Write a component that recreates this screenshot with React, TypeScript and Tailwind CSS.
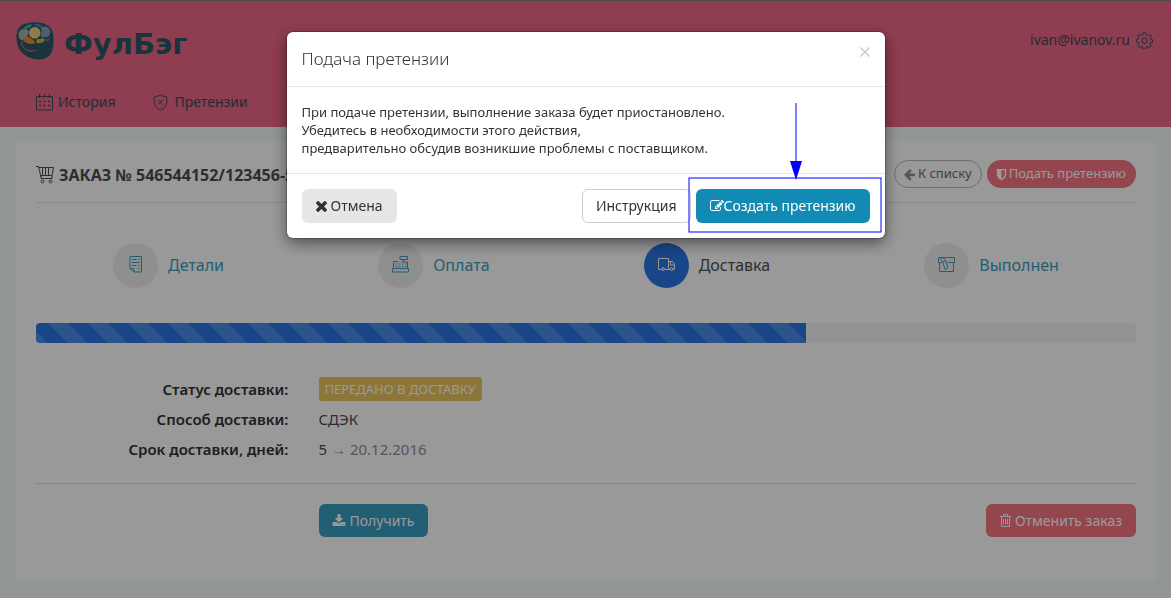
import React from "react";

type IconProps = { className?: string };

const Glyph = ({ d, className, viewBox = "0 0 1792 1792" }: { d: string; className?: string; viewBox?: string }) => (
  <svg viewBox={viewBox} fill="currentColor" aria-hidden="true" className={`inline-block shrink-0 ${className ?? ""}`}>
    <path d={d} />
  </svg>
);

const TIMES =
  "M1490 1322q0 40-28 68l-136 136q-28 28-68 28t-68-28l-294-294-294 294q-28 28-68 28t-68-28l-136-136q-28-28-28-68t28-68l294-294-294-294q-28-28-28-68t28-68l136-136q28-28 68-28t68 28l294 294 294-294q28-28 68-28t68 28l136 136q28 28 28 68t-28 68l-294 294 294 294q28 28 28 68z";
const EDIT =
  "M888 1184l116-116-152-152-116 116v56h96v96h56zm440-720q-16-16-33 1l-350 350q-17 17-1 33t33-1l350-350q17-17 1-33zm80 594v190q0 119-84.5 203.5t-203.5 84.5h-832q-119 0-203.5-84.5t-84.5-203.5v-832q0-119 84.5-203.5t203.5-84.5h832q63 0 117 25 15 7 18 23 3 17-9 29l-49 49q-14 14-32 8-23-6-45-6h-832q-66 0-113 47t-47 113v832q0 66 47 113t113 47h832q66 0 113-47t47-113v-126q0-13 9-22l64-64q15-15 35-7t20 29zm-96-738l288 288-672 672h-288v-288zm444 132l-92 92-288-288 92-92q28-28 68-28t68 28l152 152q28 28 28 68t-28 68z";
const ARROW_LEFT =
  "M1664 896v128q0 53-32.5 90.5t-84.5 37.5h-704l293 294q38 36 38 90t-38 90l-75 76q-37 37-90 37-52 0-91-37l-651-652q-37-37-37-90 0-52 37-91l651-650q38-38 91-38 52 0 90 38l75 74q38 38 38 91t-38 91l-293 293h704q52 0 84.5 37.5t32.5 90.5z";
const SHIELD =
  "M1344 960v-640h-448v1137q119-63 213-137 235-184 235-360zm192-768v768q0 86-33.5 170.5t-83 150-118 127.5-126.5 103-121 77.5-89.5 49.5-42.5 20q-12 6-26 6t-26-6q-16-7-42.5-20t-89.5-49.5-121-77.5-126.5-103-118-127.5-83-150-33.5-170.5v-768q0-26 19-45t45-19h1152q26 0 45 19t19 45z";
const DOWNLOAD =
  "M1344 1344q0-26-19-45t-45-19-45 19-19 45 19 45 45 19 45-19 19-45zm256 0q0-26-19-45t-45-19-45 19-19 45 19 45 45 19 45-19 19-45zm128-224v320q0 40-28 68t-68 28h-1472q-40 0-68-28t-28-68v-320q0-40 28-68t68-28h465l135 136q58 56 136 56t136-56l136-136h464q40 0 68 28t28 68zm-325-569q17 41-14 70l-448 448q-18 19-45 19t-45-19l-448-448q-31-29-14-70 17-39 59-39h256v-448q0-26 19-45t45-19h256q26 0 45 19t19 45v448h256q42 0 59 39z";

const LogoMark = () => (
  <svg viewBox="0 0 38 38" aria-hidden="true" className="size-[38px]">
    <path d="M7 2.500C14-.5 25-.5 31 3c5 3 6.500 8 6.500 15 0 10-2 16-9 18.500C24 38 19 37.500 14.500 36 6 33 1 26 .5 17 .2 10 2 5 7 2.500z" fill="#2c5768" />
    <path d="M7.500 6.500C9.500 3.500 12 2.500 16 2.300 15.500 5 12 7.500 7.500 6.500z" fill="#2dbd96" />
    <path d="M17.500 2.500c3-1.200 7-.8 9 1.200-2 2-6 1.500-9-1.200z" fill="#3b8aae" />
    <path d="M2.800 14c-1-5 3-8 7-7 3.500.8 3 4 2 6-1 3-3.500 3-5 5.500-2-1-4-1.500-4-4.500z" fill="#a9adb2" />
    <circle cx="18.700" cy="10.800" r="5.800" fill="#f2ce77" />
    <path d="M24.500 5.500c4-2.500 9.300-.5 9.800 4 .4 4.500-4 6.500-7.800 5.700-2-1-2.300-2.200-1.500-4 .8-2 .7-3.700-.5-5.700z" fill="#7da5b4" />
    <path d="M7.500 19c.5-4 4-5.500 6-3.500 2 2 5 1.500 5.500 6-4 1-8 .5-11.500-2.500z" fill="#e88c2b" />
    <path d="M20.500 17c3 1 5.500-2 8-.2.800 2-.5 3-2 3.800-2 .8-4 .8-6 .4z" fill="#c8b83e" />
    <path d="M29.500 16.800c2 0 4-.8 5.500-2.600-.5 3-2 4.800-4.800 5.600z" fill="#9552ae" />
    <path d="M5.500 20.500c.5 7 7 10 14.500 8" fill="none" stroke="#ee6685" strokeWidth="1" strokeLinecap="round" />
  </svg>
);

const line = { fill: "none", stroke: "currentColor", strokeWidth: 1 } as const;

const CalendarIcon = ({ className }: IconProps) => (
  <svg viewBox="0 0 17 17" aria-hidden="true" className={className} {...line}>
    <path d="M.5 2.500h16v13.500h-16zM3.500 0v4M8.500 0v4M13.500 0v4" />
    <path d="M3 7.500h2M7.500 7.500h2M12 7.500h2M3 11.500h2M7.500 11.500h2M12 11.500h2" strokeWidth="1.500" />
  </svg>
);

const ShieldXIcon = ({ className }: IconProps) => (
  <svg viewBox="0 0 17 17" aria-hidden="true" className={className} {...line}>
    <path d="M8.500.7C7 2.200 4.500 2.500 2.500 2.500 1.500 8 2 13.500 8.500 16.300 15 13.500 15.500 8 14.500 2.500 12.500 2.500 10 2.200 8.500.7z" />
    <path d="M6.500 6l4 4.500M10.500 6l-4 4.500" />
  </svg>
);

const GearIcon = ({ className }: IconProps) => (
  <svg viewBox="0 0 17 17" aria-hidden="true" className={className} {...line}>
    <path d="M7.200.7h2.600l.5 2.200 1.200.5 1.900-1.200 1.800 1.800-1.200 1.900.5 1.200 2 .5v2.600l-2 .5-.5 1.200 1.200 1.900-1.800 1.800-1.900-1.200-1.200.5-.5 2.100H7.200l-.5-2.100-1.200-.5-1.900 1.200L1.800 13.800 3 11.900l-.5-1.200-2-.5V7.600l2-.5.5-1.200L1.800 4l1.800-1.800 1.900 1.200 1.200-.5z" />
    <circle cx="8.500" cy="8.800" r="2.600" />
  </svg>
);

const CartIcon = ({ className }: IconProps) => (
  <svg viewBox="0 0 18 18" aria-hidden="true" className={className} {...line}>
    <path d="M0 .5h2.500l2.500 10.500M2.500 1.500h15L16 9.500H4.500M6.500 2v7M9.500 2v7M12.500 2v7M16 9.500v3H5" />
    <path d="M5 10v2.500" />
    <circle cx="6.500" cy="15.500" r="1.400" />
    <circle cx="14.500" cy="15.500" r="1.400" />
  </svg>
);

const DetailsIcon = ({ className }: IconProps) => (
  <svg viewBox="0 0 17 17" aria-hidden="true" className={className} {...line}>
    <path d="M3 .5h11.500v15.500h-7.500l-4-3.500zM3 12.500h4v3.500" />
    <path d="M5 3.500h4.500M11 3.500h1.500M5 6.500h7.500M5 9.500h4.500M11 9.500h1.500M10.500 12.500h2" />
  </svg>
);

const RegisterIcon = ({ className }: IconProps) => (
  <svg viewBox="0 0 17 17" aria-hidden="true" className={className} {...line}>
    <path d="M8 .5h7.500v3H8zM11.500 3.500v2.500M1.500 12.500v-7h5M9.500 6h6v6.500M.5 12.500h16v3.500h-16z" />
    <path d="M3.500 8h2M3.500 10.500h2M7 8h1.500M7 10.500h1.500M10 8h1.500M10 10.500h1.500M13 8h1.500M13 10.500h1.500" />
  </svg>
);

const TruckIcon = ({ className }: IconProps) => (
  <svg viewBox="0 0 17 17" aria-hidden="true" className={className} {...line}>
    <path d="M3.500 13.500h-3V2.500h10v11H6.500M10.500 5.500h4l2 3v5H15M12.500 5.500v3.500h4M10.500 13.500H12" />
    <circle cx="5" cy="13" r="1.400" />
    <circle cx="13.500" cy="13" r="1.400" />
  </svg>
);

const BoxIcon = ({ className }: IconProps) => (
  <svg viewBox="0 0 17 17" aria-hidden="true" className={className} {...line}>
    <path d="M.5 1.500h16v5H10M4 6.500H.5v-5M1.500 6.500v9h14v-9" />
    <path d="M2 1.500l3 5 2 7 3-1.500-2-7-3-3.500M5 6.500l2.500-1.500" />
  </svg>
);

const TrashIcon = ({ className }: IconProps) => (
  <svg viewBox="0 0 11 13" aria-hidden="true" className={className} {...line}>
    <path d="M0 2.500h11M3.500 2.500v-2h4v2M1.500 2.500v10h8v-10M3.500 5v5.500M5.500 5v5.500M7.500 5v5.500" />
  </svg>
);

const steps = [
  { label: "Детали", Icon: DetailsIcon, active: false },
  { label: "Оплата", Icon: RegisterIcon, active: false },
  { label: "Доставка", Icon: TruckIcon, active: true },
  { label: "Выполнен", Icon: BoxIcon, active: false },
];

function Header() {
  return (
    <header className="border-t border-[#7d7d7d] bg-[#ee6685] px-4 pt-5 pb-[13px] text-sm text-[#3b4a5a]">
      <div className="flex h-10 items-start justify-between">
        <a href="#home" className="flex items-center gap-2.5 text-[#2c5768]">
          <LogoMark />
          <span className="pt-1.5 font-['DejaVu_Sans'] text-[29px] leading-[34px] font-bold">ФулБэг</span>
        </a>
        <a href="#settings" className="flex items-center gap-1.5 pt-[9px] pr-0.5">
          ivan@ivanov.ru
          <GearIcon className="size-[17px]" />
        </a>
      </div>
      <nav className="mt-[29px] flex gap-[37px] px-5">
        <a href="#history" className="flex h-6 items-center gap-[5px]">
          <CalendarIcon className="size-[17px]" />
          История
        </a>
        <a href="#claims" className="flex h-6 items-center gap-[5px]">
          <ShieldXIcon className="size-[17px]" />
          Претензии
        </a>
      </nav>
    </header>
  );
}

function Order() {
  return (
    <main className="mr-[15px] ml-4 mt-[15px] rounded bg-white px-5 pt-[18px] pb-11 text-[#4a4f52]">
      <div className="flex items-start justify-between border-b border-[#e6e6e6] pb-3.5">
        <h1 className="flex h-7 items-center gap-[5px] pt-0.5 text-base font-bold">
          <CartIcon className="size-[18px]" />
          ЗАКАЗ № 546544152/123456-5
        </h1>
        <div className="flex gap-[5px] text-[13px]">
          <button type="button" className="flex h-7 items-center gap-0.5 rounded-full border border-[#b8b8b8] pr-[9px] pl-2 text-[#6a6a6a]">
            <Glyph d={ARROW_LEFT} className="size-[13px] text-[#909090]" />К списку
          </button>
          <button type="button" className="flex h-7 items-center gap-px rounded-full bg-[#f77682] pr-2.5 pl-2 text-white">
            <Glyph d={SHIELD} className="size-[13px]" />
            Подать претензию
          </button>
        </div>
      </div>

      <ol className="mt-10 flex justify-around text-base">
        {steps.map(({ label, Icon, active }) => (
          <li key={label}>
            <a href="#step" className={`flex items-center gap-2.5 ${active ? "text-[#4a4f52]" : "text-[#3a9ebf]"}`}>
              <span className={`flex size-[45px] items-center justify-center rounded-full pb-0.5 ${active ? "bg-[#2b76e4] text-white" : "bg-[#efefef]"}`}>
                <Icon className="size-[17px]" />
              </span>
              <span className="pb-0.5">{label}</span>
            </a>
          </li>
        ))}
      </ol>

      <div role="progressbar" aria-valuenow={70} aria-valuemin={0} aria-valuemax={100} className="mt-[35px] h-5 overflow-hidden rounded bg-[#f5f5f5]">
        <div className="h-full w-[70%] bg-[#2b76e4] bg-[linear-gradient(45deg,rgba(255,255,255,.15)_25%,transparent_25%,transparent_50%,rgba(255,255,255,.15)_50%,rgba(255,255,255,.15)_75%,transparent_75%,transparent)] bg-[length:40px_40px] bg-[position:12px_0px]" />
      </div>

      <dl className="mt-[31px] grid grid-cols-4 gap-x-[30px] pb-[19px] text-[15px] leading-[30px]">
        <dt className="text-right font-semibold text-[#333]">Статус доставки:</dt>
        <dd className="col-span-3 flex items-center">
          <span className="rounded-[3px] bg-[#eac561] px-1.5 text-[13px] leading-6 text-white">ПЕРЕДАНО В ДОСТАВКУ</span>
        </dd>
        <dt className="text-right font-semibold text-[#333]">Способ доставки:</dt>
        <dd className="col-span-3">СДЭК</dd>
        <dt className="text-right font-semibold text-[#333]">Срок доставки, дней:</dt>
        <dd className="col-span-3">
          5 <span className="text-[#909090]">→ 20.12.2016</span>
        </dd>
      </dl>

      <div className="grid grid-cols-4 gap-x-[30px] border-t border-[#dedede] pt-5 text-sm text-white">
        <div className="col-span-3 col-start-2 flex justify-between">
          <button type="button" className="flex h-[33px] items-center gap-1 rounded-md bg-[#3a9ebf] px-[13px]">
            <Glyph d={DOWNLOAD} className="size-3.5" />
            Получить
          </button>
          <button type="button" className="flex h-[33px] items-center gap-1 rounded-md bg-[#f77682] px-3.5">
            <TrashIcon className="h-[13px] w-[11px]" />
            Отменить заказ
          </button>
        </div>
      </div>
    </main>
  );
}

function ClaimDialog() {
  return (
    <div className="fixed inset-0 flex items-start justify-center bg-black/40 pt-8">
      <section
        role="dialog"
        aria-modal="true"
        aria-labelledby="claim-title"
        className="w-full max-w-[598px] rounded-md bg-white text-[#333] shadow-[0_0_0_1px_rgba(0,0,0,.2),0_5px_15px_rgba(0,0,0,.5)]"
      >
        <div className="flex items-start justify-between border-b border-[#e9e9e9] px-[15px] py-[15px]">
          <h2 id="claim-title" className="text-[17px] leading-6 font-light">
            Подача претензии
          </h2>
          <button type="button" aria-label="Закрыть" className="flex h-2.5 w-2.5 text-[#c8c8c8]">
            <svg viewBox="0 0 10 10" aria-hidden="true" className="size-2.5" fill="none" stroke="currentColor" strokeWidth="1.400">
              <path d="M.5.5l9 9M9.500.5l-9 9" />
            </svg>
          </button>
        </div>
        <p className="px-[15px] py-4 text-[13px] leading-[18px]">
          При подаче претензии, выполнение заказа будет приостановлено.
          <br />
          Убедитесь в необходимости этого действия,
          <br />
          предварительно обсудив возникшие проблемы с поставщиком.
        </p>
        <div className="flex justify-between border-t border-[#e5e5e5] p-[15px] text-sm">
          <button type="button" className="flex h-[34px] items-center gap-1 rounded-md bg-[#e6e6e6] px-3.5">
            <Glyph d={TIMES} viewBox="302 366 1188 1188" className="size-[11px]" />
            Отмена
          </button>
          <div className="flex gap-[5px]">
            <button type="button" className="flex h-[34px] items-center rounded-md border border-[#ccc] px-[13px]">
              Инструкция
            </button>
            <div className="relative">
              <button type="button" className="flex h-[34px] items-center rounded-md bg-[#118bb3] px-3.5 text-white">
                <Glyph d={EDIT} className="size-3.5" />
                Создать претензию
              </button>
              <svg viewBox="0 0 196 132" aria-hidden="true" className="pointer-events-none absolute -top-[87px] -right-3 h-[132px] w-[196px]">
                <rect x="3" y="76" width="192" height="54" fill="none" stroke="#00f" />
                <path d="M110 1v60" stroke="#00f" />
                <path d="M104 59h12l-6 19z" fill="#00f" />
              </svg>
            </div>
          </div>
        </div>
      </section>
    </div>
  );
}

export default function App() {
  return (
    <div className="min-h-screen bg-[#f3faf7] pb-4 font-['Noto_Sans','Open_Sans',sans-serif]">
      <Header />
      <Order />
      <ClaimDialog />
    </div>
  );
}
